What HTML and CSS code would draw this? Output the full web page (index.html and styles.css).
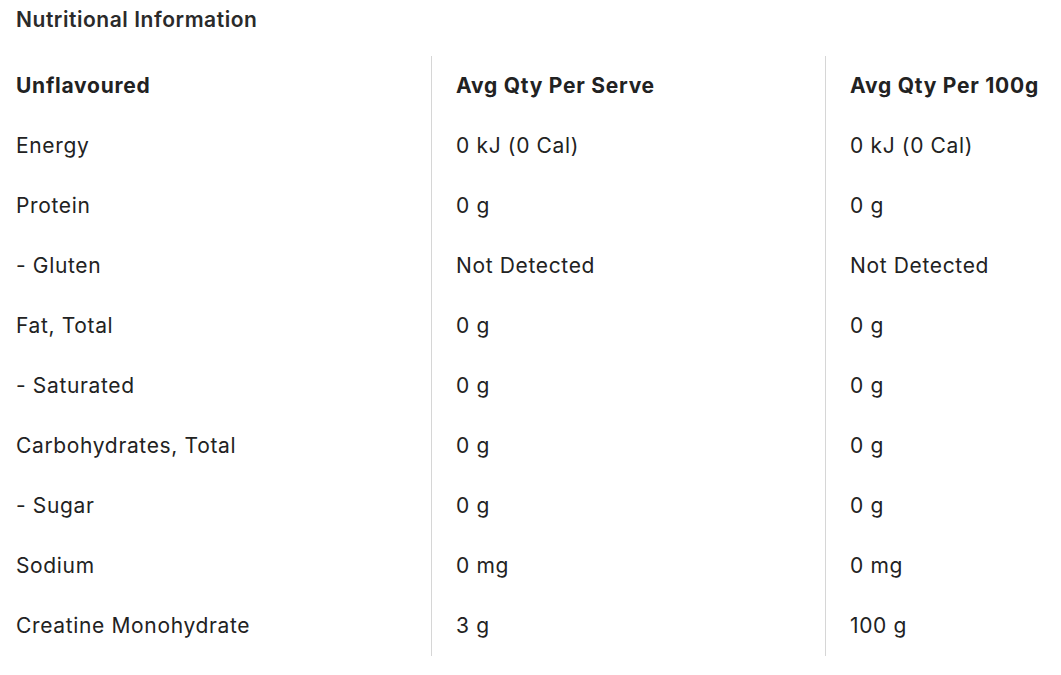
FILE: index.html
```html
<!DOCTYPE html>
<html lang="en">
<head>
<meta charset="utf-8">
<link rel="stylesheet" href="styles.css">
</head>
<body>
<div class="page">
  <h2 class="title">Nutritional Information</h2>
  <div class="table">
    <div class="cell head c1">Unflavoured</div>
    <div class="cell head c2">Avg Qty Per Serve</div>
    <div class="cell head c3">Avg Qty Per 100g</div>

    <div class="cell c1">Energy</div>
    <div class="cell c2">0 kJ (0 Cal)</div>
    <div class="cell c3">0 kJ (0 Cal)</div>

    <div class="cell c1">Protein</div>
    <div class="cell c2">0 g</div>
    <div class="cell c3">0 g</div>

    <div class="cell c1">- Gluten</div>
    <div class="cell c2">Not Detected</div>
    <div class="cell c3">Not Detected</div>

    <div class="cell c1">Fat, Total</div>
    <div class="cell c2">0 g</div>
    <div class="cell c3">0 g</div>

    <div class="cell c1">- Saturated</div>
    <div class="cell c2">0 g</div>
    <div class="cell c3">0 g</div>

    <div class="cell c1">Carbohydrates, Total</div>
    <div class="cell c2">0 g</div>
    <div class="cell c3">0 g</div>

    <div class="cell c1">- Sugar</div>
    <div class="cell c2">0 g</div>
    <div class="cell c3">0 g</div>

    <div class="cell c1">Sodium</div>
    <div class="cell c2">0 mg</div>
    <div class="cell c3">0 mg</div>

    <div class="cell c1">Creatine Monohydrate</div>
    <div class="cell c2">3 g</div>
    <div class="cell c3">100 g</div>
  </div>
</div>
</body>
</html>
```
FILE: styles.css
```css
html, body {
  margin: 0;
  padding: 0;
  background: #ffffff;
}
body {
  font-family: "Inter", "Liberation Sans", sans-serif;
  color: #222222;
}
.page {
  padding: 8px 0 0 16px;
}
.title {
  margin: 0 0 24px 0;
  font-size: 21px;
  line-height: 24px;
  font-weight: 600;
  letter-spacing: 0.55px;
  color: #2a2a2a;
}
.table {
  display: grid;
  grid-template-columns: 415px 394px 1fr;
  grid-auto-rows: 60px;
}
.cell {
  display: flex;
  align-items: center;
  padding-bottom: 2px;
  font-size: 21px;
  letter-spacing: 0.65px;
  white-space: nowrap;
}
.c2, .c3 {
  border-left: 1px solid #d6d6d6;
  padding-left: 24px;
}
.head {
  font-weight: 700;
  letter-spacing: 0.75px;
}
```
